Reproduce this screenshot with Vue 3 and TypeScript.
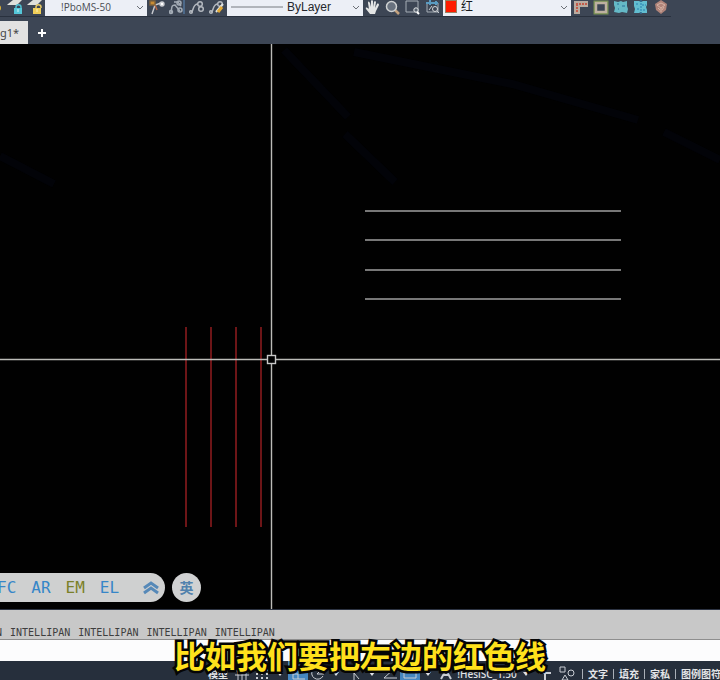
<script setup lang="ts">
import { ref } from 'vue'

const layerStyle = ref('!PboMS-50')
const lineType = ref('ByLayer')
const colour = ref('红')
const command = ref('')

const rows: number[] = [167, 196, 226, 255]
const columns: number[] = [186, 211, 236, 261]
const history: string[] = ['INTELLIPAN', 'INTELLIPAN', 'INTELLIPAN', 'INTELLIPAN']
const shortcuts: { label: string; olive?: boolean }[] = [
  { label: 'FC' },
  { label: 'AR' },
  { label: 'EM', olive: true },
  { label: 'EL' },
]
const menus: string[] = ['文字', '填充', '家私', '图例图符']
</script>

<template>
  <main class="app">
    <header class="toolbar">
      <div class="tools leading">
        <button aria-label="图层灯">
          <svg viewBox="0 0 16 16"><circle cx="11" cy="8" r="3" fill="#e0b536" /></svg>
        </button>
        <button aria-label="锁定图层">
          <svg viewBox="0 0 16 16">
            <path d="M1 4 6 0h9l-5 5H0z" fill="#dfe0da" />
            <path d="M9 9V7c0-3 5-3 5 0v2" fill="none" stroke="#52bfd0" stroke-width="1.5" />
            <rect x="7" y="8" width="8" height="6" fill="#55c7d8" />
            <path d="M11 9v3" stroke="#d8f4f5" />
          </svg>
        </button>
        <button aria-label="解锁图层">
          <svg viewBox="0 0 16 16">
            <path d="M1 4 6 0h9l-5 5H0z" fill="#dfe0da" />
            <path d="M9 9V7c0-3 5-3 5 0v1" fill="none" stroke="#e5c866" stroke-width="1.5" />
            <rect x="6" y="8" width="8" height="6" fill="#f0ce58" />
            <path d="M10 9v3" stroke="#fff5bc" />
          </svg>
        </button>
      </div>
      <div class="picker picker-style">
        <select v-model="layerStyle" aria-label="样式"><option>!PboMS-50</option></select>
        <svg class="chevron" viewBox="0 0 8 8"><path d="m1 2 3 3 3-3" /></svg>
      </div>
      <div class="tools">
        <button aria-label="多重引线">
          <svg viewBox="0 0 16 16" fill="none" stroke="#c9cbd0" stroke-width="1.4">
            <path d="m3 14 3-9 6-2" /><path d="m6 5 2 5" stroke="#bb6a4b" />
            <rect x="1" y="1" width="5" height="4" fill="#c88c35" stroke="#80623b" />
            <circle cx="13" cy="4" r="2" fill="#fff" />
          </svg>
        </button>
        <button aria-label="添加引线">
          <svg viewBox="0 0 16 16" fill="none" stroke="#a4acb6" stroke-width="1.5">
            <path d="M2 13c1-5 0-8 4-8l5 6M5 2h4l3 4" />
            <circle cx="2" cy="12" r="1.5" /><circle cx="10" cy="3" r="2" /><circle cx="11" cy="10" r="2" />
            <path d="M15 0v14" stroke="#53769b" />
          </svg>
        </button>
        <button aria-label="对齐引线">
          <svg viewBox="0 0 16 16" fill="none" stroke="#b3b8bf" stroke-width="1.5">
            <path d="M2 12C5 12 3 4 9 4" /><circle cx="2" cy="12" r="1.3" />
            <circle cx="11" cy="4" r="2.3" /><circle cx="12" cy="9" r="2.3" />
          </svg>
        </button>
        <button aria-label="编辑引线">
          <svg viewBox="0 0 16 16" fill="none" stroke="#b3b8bf" stroke-width="1.5">
            <path d="M2 12C5 12 3 4 9 4" /><circle cx="2" cy="12" r="1.3" /><circle cx="11" cy="4" r="2.3" />
            <path d="m7 12 7-8" stroke="#dfe3e2" stroke-width="2" /><path d="m9 12 4-5" stroke="#e2a936" stroke-width="3" />
          </svg>
        </button>
      </div>
      <div class="picker picker-line">
        <select v-model="lineType" aria-label="线型"><option>ByLayer</option></select>
        <svg class="sample" viewBox="0 0 52 2"><path d="M0 1h52" /></svg>
        <svg class="chevron" viewBox="0 0 8 8"><path d="m1 2 3 3 3-3" /></svg>
      </div>
      <div class="tools">
        <button aria-label="平移">
          <svg viewBox="0 0 16 16">
            <path d="M5 14 1 9c-1-2 1-2 3 0L3 3c0-2 1-2 2 0l1 4V1c0-1 2-1 2 0v6l1-5c0-1 2-1 2 0l-1 6 2-4c1-1 2 0 2 1l-3 6-1 3z" fill="#e4e5e5" />
          </svg>
        </button>
        <button aria-label="缩放">
          <svg viewBox="0 0 16 16" fill="none">
            <path d="m10 10 4 4" stroke="#c4a27e" stroke-width="2.5" />
            <circle cx="6.5" cy="6.5" r="5" fill="#69727f" stroke="#ced1d2" stroke-width="1.5" />
          </svg>
        </button>
        <button aria-label="窗口缩放">
          <svg viewBox="0 0 16 16" fill="none" stroke="#a6adb6">
            <path d="M1 1h12v11H1z" /><circle cx="11" cy="10" r="2.2" fill="#58626f" stroke="#e5e8e9" />
            <path d="m12 12 2 2" stroke="#fff" stroke-width="2" />
          </svg>
        </button>
        <button aria-label="上一视图">
          <svg viewBox="0 0 16 16" fill="none" stroke="#a6adb6">
            <path d="M2 3v9h11V3" /><path d="M1 3h12M5 0v5M11 1v4" stroke="#5a9bc1" stroke-width="2" />
            <circle cx="10" cy="9" r="2.5" stroke="#d5d7d9" /><path d="m12 11 2 2M4 10l3-4" stroke="#c9cdd1" />
          </svg>
        </button>
      </div>
      <div class="picker picker-colour">
        <select v-model="colour" aria-label="颜色"><option>红</option></select>
        <span class="swatch"></span>
        <svg class="chevron" viewBox="0 0 8 8"><path d="m1 2 3 3 3-3" /></svg>
      </div>
      <div class="tools">
        <button aria-label="墙角">
          <svg viewBox="0 0 16 16">
            <path d="M1 1h14v6H7v7H1z" fill="#b9aa9f" /><path d="M3 4h11M4 4v9" stroke="#c35b4a" stroke-width="2" stroke-dasharray="2 1" />
          </svg>
        </button>
        <button aria-label="边框">
          <svg viewBox="0 0 16 16" fill="none">
            <path d="M2 2h12v11H2z" stroke="#779050" stroke-width="3" />
            <path d="M3 3h10v9H3z" stroke="#bdb0a0" stroke-width="2.5" />
          </svg>
        </button>
        <button aria-label="区域">
          <svg viewBox="0 0 16 16">
            <path d="m1 1 4 1 3-1 2 1 4-1v5l1 3-1 4-5-1-3 1-5-1 1-4-1-3z" fill="#65b9c7" />
            <path d="M4 4h2M9 6h3M5 9h1" stroke="#286f99" />
          </svg>
        </button>
        <button aria-label="分割区域">
          <svg viewBox="0 0 16 16">
            <path d="M1 1h5l2 1 2-1h4v4l-1 2 1 3v3H9l-1-1-2 1H1l1-4-1-3z" fill="#62bdd0" />
            <path d="M8 0v14M3 4h3M9 5h4M4 9h3M10 10h3" stroke="#287eb0" stroke-dasharray="2 1" />
          </svg>
        </button>
        <button aria-label="图块">
          <svg viewBox="0 0 16 16">
            <path d="m8 0 6 4-1 6-5 4-5-4-1-6z" fill="#af8379" /><path d="m4 5 4-2 4 2-4 3zM8 8v4M5 8l2 2M11 7l-2 3" fill="none" stroke="#d4b2a5" />
          </svg>
        </button>
      </div>
    </header>

    <nav class="tabs">
      <a class="tab" href="#drawing"><span>g1*</span></a>
      <button class="add" aria-label="新建图形">
        <svg viewBox="0 0 10 10"><path d="M5 1v8M1 5h8" /></svg>
      </button>
    </nav>

    <section id="drawing" class="canvas">
      <svg class="model" viewBox="0 0 720 565" preserveAspectRatio="xMidYMid slice">
        <g class="trace">
          <path d="m284 6 64 67M345 90l50 48M354 8l158 32 126 36M664 88l56 28M0 112l54 28" />
        </g>
        <path v-for="y in rows" :key="y" class="row" :d="`M365 ${y}H621`" />
        <path v-for="x in columns" :key="x" class="column" :d="`M${x} 283V483`" />
        <path class="cross" d="M0 315.5H267M276 315.5H720M271.5 0V311M271.5 320V566" />
        <rect class="pickbox" x="267.5" y="311.5" width="8" height="8" />
      </svg>
      <div class="floating">
        <div class="shortcuts">
          <button v-for="item in shortcuts" :key="item.label" :class="{ olive: item.olive }">{{ item.label }}</button>
          <button class="collapse" aria-label="收起">
            <svg viewBox="0 0 16 14"><path d="m1 7 7-5 7 5M1 12l7-5 7 5" /></svg>
          </button>
        </div>
        <button class="language">英</button>
      </div>
    </section>

    <section class="console">
      <p class="history"><span>N</span><span v-for="(word, i) in history" :key="i">{{ word }}</span></p>
      <input v-model="command" class="command" type="text" aria-label="命令" />
    </section>

    <footer class="status">
      <button class="model-space">模型</button>
      <div class="modes">
        <button aria-label="栅格"><svg viewBox="0 0 18 16"><path d="M2 5h14M2 9h14M5 2v12M9 2v12M13 2v12" /></svg></button>
        <button aria-label="捕捉"><svg viewBox="0 0 18 16"><path d="M3 4h13M3 8h13M3 12h13" stroke-width="2" stroke-dasharray="2 3" /></svg></button>
        <button class="caret" aria-label="捕捉选项"><svg viewBox="0 0 8 8"><path d="M1 2h6L4 6z" /></svg></button>
        <button class="on" aria-label="正交"><svg viewBox="0 0 18 16"><path d="M4 2v11h12M4 8h5v5" /></svg></button>
        <button aria-label="极轴"><svg viewBox="0 0 18 16"><path d="M13 3a6 6 0 1 0 1 7M8 8h7M8 8l5-5" /></svg></button>
        <button class="caret" aria-label="极轴选项"><svg viewBox="0 0 8 8"><path d="M1 2h6L4 6z" /></svg></button>
        <button aria-label="等轴测"><svg viewBox="0 0 18 16"><path d="m4 3 5 4 5 6M9 7v7" /></svg></button>
        <button class="caret" aria-label="等轴测选项"><svg viewBox="0 0 8 8"><path d="M1 2h6L4 6z" /></svg></button>
        <button aria-label="追踪"><svg viewBox="0 0 18 16"><path d="M14 2 3 12h13" /></svg></button>
        <button class="on" aria-label="对象捕捉"><svg viewBox="0 0 18 16"><path d="M3 3h12v9H3z" /></svg></button>
        <button class="caret" aria-label="捕捉对象选项"><svg viewBox="0 0 8 8"><path d="M1 2h6L4 6z" /></svg></button>
        <button aria-label="注释"><svg viewBox="0 0 18 16"><path d="m4 13 5-9 5 9M6 9l6 0" stroke-width="2" /></svg></button>
      </div>
      <button class="scale">!HesiSC_1:50</button>
      <div class="modes">
        <button class="caret" aria-label="比例选项"><svg viewBox="0 0 8 8"><path d="M1 2h6L4 6z" /></svg></button>
        <button class="wide" aria-label="添加"><svg viewBox="0 0 18 16"><path d="M3 7h12M9 2v12" stroke-width="2" /></svg></button>
        <button class="wide" aria-label="图形"><svg viewBox="0 0 18 16"><path d="M2 1h5v5H2z" /><circle cx="13" cy="7" r="3" /><path d="m4 14 3-5 3 5z" /></svg></button>
      </div>
      <div class="menus"><button v-for="item in menus" :key="item">{{ item }}</button></div>
    </footer>

    <p class="caption">比如我们要把左边的红色线</p>
  </main>
</template>

<style>
body {
  margin: 0;
  background: #000;
}
</style>

<style scoped>
.app {
  position: relative;
  display: grid;
  grid-template-rows: 17px 27px minmax(0, 1fr) 51px 19px;
  height: 100vh;
  overflow: hidden;
  font-family: "Noto Sans", "Noto Sans CJK SC", sans-serif;
  background: #3d4655;
}
button {
  padding: 0;
  border: 0;
  background: none;
  font: inherit;
  color: inherit;
  white-space: nowrap;
}
svg {
  display: block;
}
.toolbar {
  display: flex;
  overflow: hidden;
}
.tools {
  display: flex;
  flex: none;
  border-bottom: 1px solid #29313e;
}
.leading {
  margin-left: -15px;
}
.tools button {
  display: flex;
  justify-content: center;
  width: 20px;
  height: 16px;
}
.tools svg {
  width: 16px;
  height: 16px;
}
.picker {
  position: relative;
  display: flex;
  flex: none;
  box-sizing: border-box;
  border-bottom: 1px solid #29313e;
}
.picker-style {
  width: 102px;
}
.picker-line {
  width: 136px;
}
.picker-colour {
  width: 128px;
}
select {
  width: 100%;
  height: 16px;
  padding: 0 16px 2px;
  border: 0;
  border-radius: 0;
  appearance: none;
  background: #eceff6;
  color: #4a4c53;
  font: 10px/14px "Open Sans", sans-serif;
}
.picker-line select {
  padding-left: 60px;
  color: #25272d;
  font: 12px/14px "Liberation Sans", sans-serif;
}
.picker-colour select {
  padding-left: 18px;
  color: #16181c;
  font: 12px/14px "Liberation Sans", "Noto Sans CJK SC", sans-serif;
}
.chevron {
  position: absolute;
  top: 4px;
  right: 3px;
  width: 8px;
  height: 8px;
  fill: none;
  stroke: #6c7077;
  pointer-events: none;
}
.sample {
  position: absolute;
  top: 6px;
  left: 4px;
  width: 52px;
  height: 2px;
  stroke: #777a80;
  pointer-events: none;
}
.swatch {
  position: absolute;
  top: 0;
  left: 2px;
  width: 10px;
  height: 11px;
  border: 1px solid #9a8062;
  background: #ff1c00;
  pointer-events: none;
}
.tabs {
  display: flex;
  align-items: flex-end;
}
.tab {
  box-sizing: border-box;
  width: 28px;
  height: 23px;
  background: #e2e2e2;
  color: #454545;
  font-size: 11px;
  line-height: 23px;
  text-decoration: none;
}
.add {
  display: grid;
  place-items: center;
  width: 28px;
  height: 22px;
}
.add svg {
  width: 10px;
  height: 10px;
  stroke: #fff;
  stroke-width: 2;
}
.canvas {
  position: relative;
  min-height: 0;
  background: #010101;
  border-bottom: 1px solid #2d3443;
}
.model {
  width: 100%;
  height: 100%;
  fill: none;
}
.trace {
  stroke: #020308;
  stroke-width: 8;
}
.row {
  stroke: #777;
  stroke-width: 2;
}
.column {
  stroke: #6d1517;
  stroke-width: 2;
}
.cross {
  stroke: #bcbcb8;
  stroke-width: 1.4;
}
.pickbox {
  stroke: #c8c8c8;
  stroke-width: 1.4;
}
.floating {
  position: absolute;
  bottom: 7px;
  left: 0;
  display: flex;
  gap: 7px;
}
.shortcuts {
  display: flex;
  align-items: center;
  gap: 15px;
  box-sizing: border-box;
  width: 165px;
  height: 29px;
  border-radius: 0 15px 15px 0;
  background: #cfd0d0;
  color: #3686c8;
  font: 16px/29px "DejaVu Sans Mono", monospace;
}
.shortcuts button:first-child {
  margin-left: -3px;
}
.shortcuts .olive {
  color: #7b8029;
}
.shortcuts .collapse {
  margin-left: auto;
  margin-right: 6px;
}
.collapse svg {
  width: 16px;
  height: 14px;
  fill: none;
  stroke: #5689b8;
  stroke-width: 3;
}
.language {
  width: 29px;
  height: 29px;
  border-radius: 50%;
  background: #d0d1d2;
  color: #5281ad;
  font-size: 14px;
  font-weight: 700;
  line-height: 27px;
}
.console {
  display: grid;
  grid-template-rows: 30px 21px;
}
.history {
  display: flex;
  gap: 8px;
  box-sizing: border-box;
  margin: 0;
  padding-top: 16px;
  overflow: hidden;
  border-bottom: 1px solid #8e8e8e;
  background: #c8c8c8;
  color: #3e3e3e;
  font: 10px/14px "DejaVu Sans Mono", monospace;
}
.history span:first-child {
  margin-left: -4px;
}
.command {
  width: 100%;
  box-sizing: border-box;
  border: 0;
  border-radius: 0;
  padding: 0 8px;
  background: #fcfcfd;
  font: 12px "DejaVu Sans Mono", monospace;
}
.status {
  display: flex;
  padding-left: 208px;
  overflow: hidden;
  background: #262f3c;
  color: #e3e5e8;
  font-size: 10px;
  font-weight: 700;
  line-height: 26px;
}
.status button {
  flex: none;
  height: 26px;
}
.model-space {
  width: 24px;
  text-align: left;
}
.modes {
  display: flex;
  flex: none;
}
.modes button {
  display: grid;
  place-items: center;
  width: 20px;
}
.modes svg {
  width: 18px;
  height: 16px;
  fill: none;
  stroke: #c9cdd3;
}
.modes .on {
  background: #4587c1;
}
.modes .caret {
  width: 16px;
}
.modes .caret svg {
  width: 8px;
  height: 8px;
  fill: #e0e2e5;
  stroke: none;
}
.modes .wide {
  width: 22px;
}
.scale {
  width: 62px;
  font-size: 10px;
  font-weight: 500;
}
.menus {
  display: flex;
  flex: 1;
  min-width: 0;
  padding-left: 4px;
}
.menus button {
  display: flex;
  align-items: center;
  gap: 5px;
  padding-right: 5px;
}
.menus button::before {
  content: "";
  width: 1px;
  height: 10px;
  background: #a9afb7;
}
.caption {
  position: absolute;
  right: 0;
  bottom: 5px;
  left: 0;
  margin: 0;
  color: #ffe11c;
  font: 700 31px/40px "Noto Sans CJK SC", sans-serif;
  text-align: center;
  -webkit-text-stroke: 5px #050505;
  paint-order: stroke fill;
  pointer-events: none;
}
</style>
